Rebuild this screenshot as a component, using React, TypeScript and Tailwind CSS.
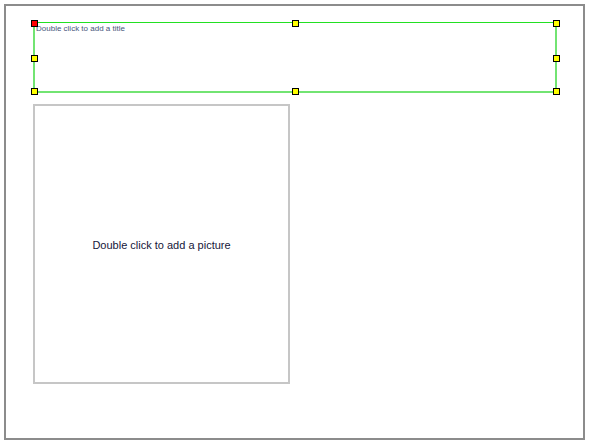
import React from 'react';

// Small square grip drawn over the title frame
const Handle: React.FC<{ className: string; red?: boolean }> = ({ className, red }) => (
  <div
    className={`absolute w-[7px] h-[7px] border border-black ${red ? 'bg-[#ff0000]' : 'bg-[#ffff00]'} ${className}`}
  />
);

const App: React.FC = () => {
  return (
    <div className="w-[590px] h-[445px] bg-white p-[4px]" style={{ fontFamily: '"Liberation Sans", Arial, sans-serif' }}>
      <div className="w-[581px] h-[436px] border-2 border-[#8c8c8c] pl-[27px] pt-[16px]">
        {/* Title placeholder */}
        <div className="relative w-[524px] h-[71px] border-x-2 border-b-2 border-t border-x-[#72e472] border-b-[#72e472] border-t-[#22e022]">
          <div className="pl-[1px] pt-[1px] text-[8px] leading-[9px] text-[#46557a]">Double click to add a title</div>
          <Handle red className="-left-[4px] -top-[3px]" />
          <Handle className="left-[257px] -top-[3px]" />
          <Handle className="-right-[5px] -top-[3px]" />
          <Handle className="-left-[4px] top-[32px]" />
          <Handle className="-right-[5px] top-[32px]" />
          <Handle className="-left-[4px] -bottom-[4px]" />
          <Handle className="left-[257px] -bottom-[4px]" />
          <Handle className="-right-[5px] -bottom-[4px]" />
        </div>

        {/* Picture placeholder */}
        <div className="mt-[11px] w-[257px] h-[280px] border-2 border-[#c6c6c6] flex items-center justify-center">
          <span className="pt-[2px] text-[11px] text-[#16163a]">Double click to add a picture</span>
        </div>
      </div>
    </div>
  );
};

export default App;
